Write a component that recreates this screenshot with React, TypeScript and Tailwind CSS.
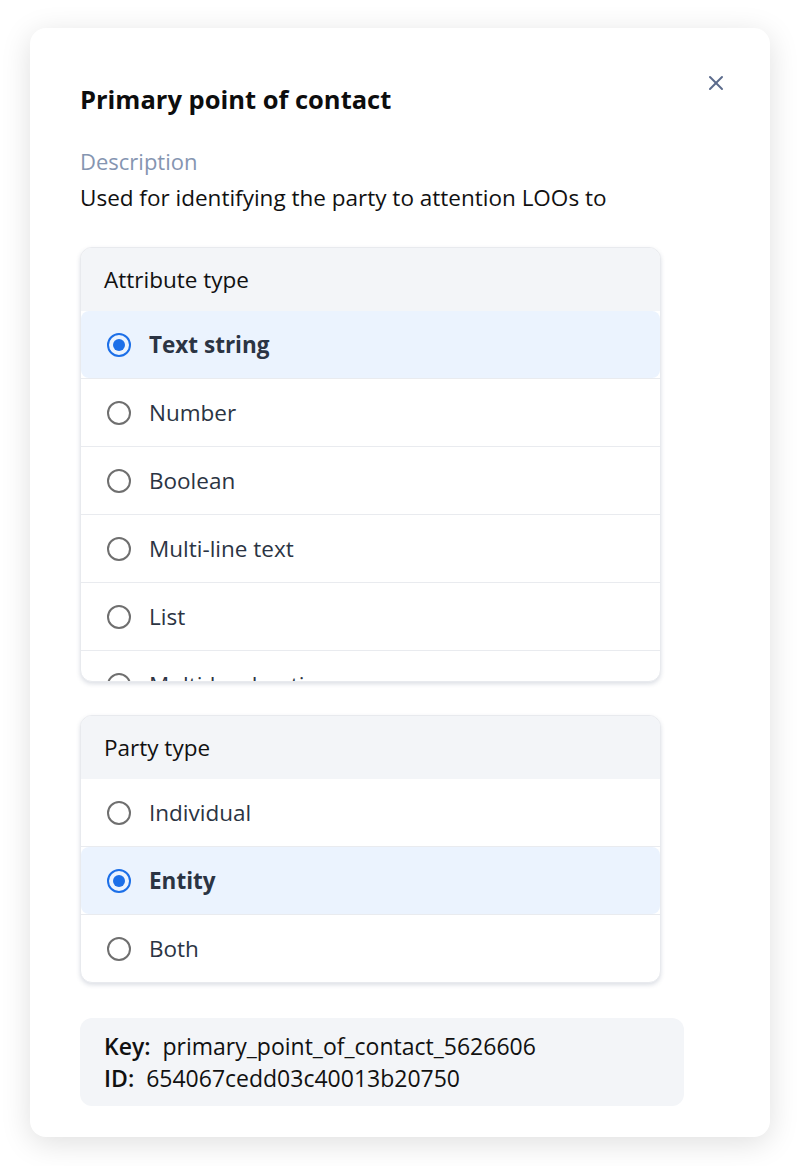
import { X } from 'lucide-react'

type Option = { label: string; selected?: boolean }

const attributeTypes: Option[] = [
  { label: 'Text string', selected: true },
  { label: 'Number' },
  { label: 'Boolean' },
  { label: 'Multi-line text' },
  { label: 'List' },
  { label: 'Multi-level options' },
]

const partyTypes: Option[] = [
  { label: 'Individual' },
  { label: 'Entity', selected: true },
  { label: 'Both' },
]

function Radio({ checked }: { checked?: boolean }) {
  if (checked) {
    return (
      <span className="flex h-[24px] w-[24px] shrink-0 items-center justify-center rounded-full border-[2.5px] border-[#1c6fe8]">
        <span className="h-[12px] w-[12px] rounded-full bg-[#1c6fe8]" />
      </span>
    )
  }
  return <span className="h-[24px] w-[24px] shrink-0 rounded-full border-[2.5px] border-[#6f6f6f]" />
}

function OptionRow({ option }: { option: Option }) {
  return (
    <div className="border-b border-[#e9ebef] last:border-b-0">
      <div
        className={
          option.selected
            ? 'flex h-[67px] items-center gap-[18px] rounded-lg bg-[#ebf3fe] pl-[26px]'
            : 'flex h-[67px] items-center gap-[18px] pl-[26px]'
        }
      >
        <Radio checked={option.selected} />
        <span
          className={
            option.selected
              ? 'text-[22.5px] font-bold text-[#2b3443]'
              : 'text-[22.5px] text-[#2b3443]'
          }
        >
          {option.label}
        </span>
      </div>
    </div>
  )
}

function OptionGroup({ title, options, maxHeight }: { title: string; options: Option[]; maxHeight?: string }) {
  return (
    <div className="w-[581px] overflow-hidden rounded-xl border border-[#e8eaee] bg-white shadow-[0_2px_4px_rgba(60,80,110,0.18)]">
      <div className="flex h-[63px] items-center bg-[#f3f5f8] px-[23px] text-[22.5px] text-[#111]">{title}</div>
      <div className={maxHeight ?? ''}>
        {options.map(o => (
          <OptionRow key={o.label} option={o} />
        ))}
      </div>
    </div>
  )
}

export default function App() {
  return (
    <div className="min-h-screen bg-white pt-[28px] font-['Open_Sans',sans-serif]">
      <div className="relative mx-[30px] w-[740px] rounded-2xl bg-white pb-[31px] pl-[50px] pt-[55px] shadow-[0_6px_30px_rgba(0,0,0,0.13)]">
        <button className="absolute right-[42px] top-[43px] text-[#5b6b8c]">
          <X size={24} strokeWidth={2} />
        </button>

        <h1 className="text-[25.5px] font-bold leading-[32px] text-[#0d0d0d]">Primary point of contact</h1>

        <div className="mt-[32px] text-[22px] leading-[28px] text-[#8595b1]">Description</div>
        <p className="mt-[9px] text-[22.5px] leading-[28px] text-[#111]">
          Used for identifying the party to attention LOOs to
        </p>

        <div className="mt-[35px]">
          <OptionGroup title="Attribute type" options={attributeTypes} maxHeight="h-[370px] overflow-hidden" />
        </div>

        <div className="mt-[33px]">
          <OptionGroup title="Party type" options={partyTypes} />
        </div>

        <div className="mt-[35px] w-[604px] rounded-xl bg-[#f3f5f8] px-[24px] py-[12px] text-[23px] leading-[32px] text-[#111]">
          <div>
            <span className="font-semibold">Key:</span>&nbsp; primary_point_of_contact_5626606
          </div>
          <div>
            <span className="font-semibold">ID:</span>&nbsp; 654067cedd03c40013b20750
          </div>
        </div>
      </div>
    </div>
  )
}
